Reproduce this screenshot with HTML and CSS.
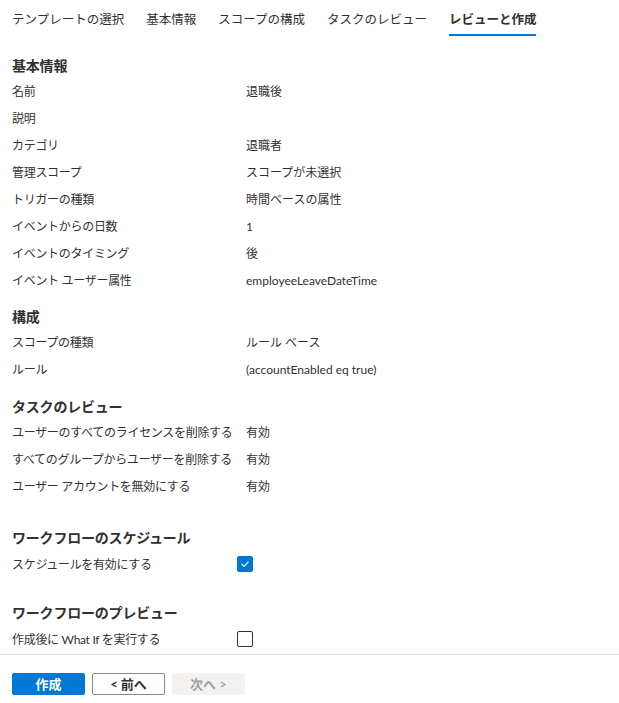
FILE: index.html
```html
<!DOCTYPE html>
<html lang="ja">
<head>
<meta charset="utf-8">
<link rel="stylesheet" href="styles.css">
</head>
<body>
<div class="page">
  <nav class="tabs">
    <div class="tab">テンプレートの選択</div>
    <div class="tab">基本情報</div>
    <div class="tab">スコープの構成</div>
    <div class="tab">タスクのレビュー</div>
    <div class="tab active">レビューと作成</div>
  </nav>
  <main class="content">
    <section class="section first">
      <h2 class="heading">基本情報</h2>
      <div class="row"><span class="label">名前</span><span class="value">退職後</span></div>
      <div class="row"><span class="label">説明</span><span class="value"></span></div>
      <div class="row"><span class="label">カテゴリ</span><span class="value">退職者</span></div>
      <div class="row"><span class="label">管理スコープ</span><span class="value">スコープが未選択</span></div>
      <div class="row"><span class="label">トリガーの種類</span><span class="value">時間ベースの属性</span></div>
      <div class="row"><span class="label">イベントからの日数</span><span class="value">1</span></div>
      <div class="row"><span class="label">イベントのタイミング</span><span class="value">後</span></div>
      <div class="row"><span class="label">イベント ユーザー属性</span><span class="value">employeeLeaveDateTime</span></div>
    </section>
    <section class="section">
      <h2 class="heading">構成</h2>
      <div class="row"><span class="label">スコープの種類</span><span class="value">ルール ベース</span></div>
      <div class="row"><span class="label">ルール</span><span class="value">(accountEnabled eq true)</span></div>
    </section>
    <section class="section tasks">
      <h2 class="heading">タスクのレビュー</h2>
      <div class="row"><span class="label">ユーザーのすべてのライセンスを削除する</span><span class="value">有効</span></div>
      <div class="row"><span class="label">すべてのグループからユーザーを削除する</span><span class="value">有効</span></div>
      <div class="row"><span class="label">ユーザー アカウントを無効にする</span><span class="value">有効</span></div>
    </section>
    <section class="section wide">
      <h2 class="heading">ワークフローのスケジュール</h2>
      <div class="row check-row"><span class="label">スケジュールを有効にする</span>
        <span class="checkbox checked"><svg viewBox="0 0 16 16" width="16" height="16"><path d="M4.4 8.2 L6.9 10.6 L11.6 5.8" fill="none" stroke="#fff" stroke-width="1.2" stroke-linecap="round" stroke-linejoin="round"/></svg></span>
      </div>
    </section>
    <section class="section wide2">
      <h2 class="heading">ワークフローのプレビュー</h2>
      <div class="row check-row tall"><span class="label">作成後に What If を実行する</span>
        <span class="checkbox"></span>
      </div>
    </section>
  </main>
  <footer class="footer">
    <button class="btn primary">作成</button>
    <button class="btn secondary">&lt; 前へ</button>
    <button class="btn disabled">次へ &gt;</button>
  </footer>
</div>
</body>
</html>
```
FILE: styles.css
```css
* { box-sizing: border-box; }
html, body { margin: 0; padding: 0; background: #fff; }
body {
  font-family: "Lato", "Noto Sans CJK JP", sans-serif;
  font-size: 12px;
  color: #323130;
}
.page {
  height: 703px;
  display: flex;
  flex-direction: column;
  overflow: hidden;
}
.tabs {
  display: flex;
  gap: 22px;
  padding: 0 12px;
  flex: none;
}
.tab {
  font-size: 12.5px;
  line-height: 20px;
  padding-top: 10px;
  padding-bottom: 4px;
  border-bottom: 2px solid transparent;
  white-space: nowrap;
}
.tab.active {
  font-weight: 700;
  border-bottom-color: #0078d4;
}
.content {
  flex: 1;
  overflow: hidden;
  padding: 0 12px;
}
.section { margin-top: 14px; }
.section.first { margin-top: 20px; }
.section.tasks { margin-top: 15px; }
.section.wide { margin-top: 29px; }
.section.wide2 { margin-top: 25px; }
.heading {
  margin: 0 0 1px;
  font-size: 14px;
  line-height: 20px;
  font-weight: 700;
  letter-spacing: -0.2px;
}
.row {
  display: grid;
  grid-template-columns: 234px 1fr;
  height: 27px;
  padding-top: 3px;
  align-items: center;
  line-height: 18px;
}
.label { letter-spacing: -0.3px; }
.row.check-row {
  grid-template-columns: 225px 1fr;
  height: 29px;
  padding-top: 0;
}
.row.check-row.tall { height: 30px; }
.check-row .label { padding-top: 2px; }
.label, .value { white-space: nowrap; }
.checkbox {
  width: 16px;
  height: 16px;
  border: 1px solid #323130;
  border-radius: 2px;
  display: flex;
  align-items: center;
  justify-content: center;
}
.checkbox.checked {
  background: #0078d4;
  border-color: #0078d4;
}
.checkbox svg { display: block; }
.footer {
  flex: none;
  height: 49px;
  border-top: 1px solid #e1dfdd;
  padding: 18px 12px 0;
  display: flex;
  gap: 7px;
  align-items: flex-start;
}
.btn {
  font-family: inherit;
  font-size: 13px;
  font-weight: 700;
  width: 73px;
  height: 22px;
  border-radius: 2px;
  padding: 0;
  line-height: 20px;
  border: 1px solid transparent;
}
.btn.primary { background: #0078d4; color: #fff; border-color: #0078d4; }
.btn.secondary { background: #fff; color: #323130; border-color: #8a8886; }
.btn.disabled { background: #f3f2f1; color: #a19f9d; border-color: #f3f2f1; font-weight: 600; }
```
